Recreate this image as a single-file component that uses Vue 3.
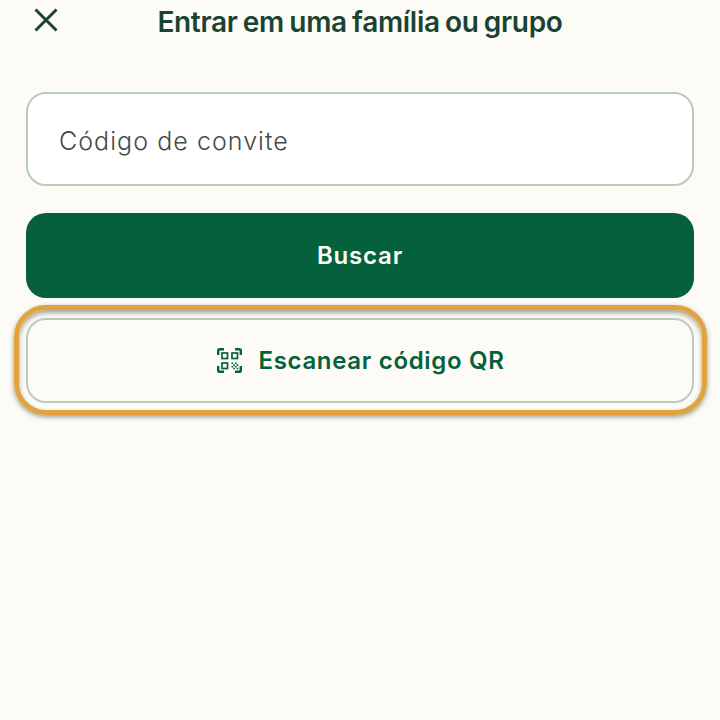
<script setup>
</script>

<template>
  <div class="page">
    <header class="head">
      <button class="close" aria-label="Fechar">
        <svg width="26" height="26" viewBox="0 0 26 26" fill="none">
          <path d="M2.500 2.500 L23.500 23.500 M23.500 2.500 L2.500 23.500" stroke="#1c4332" stroke-width="3" />
        </svg>
      </button>
      <h1 class="title">Entrar em uma família ou grupo</h1>
    </header>
    <main class="form">
      <div class="field">Código de convite</div>
      <button class="primary">Buscar</button>
      <button class="secondary">
        <svg class="qr" width="25" height="25" viewBox="0 0 25 25" fill="none">
          <path d="M1.200 7 V2.800 Q1.200 1.200 2.800 1.200 H7 M18 1.200 H22.200 Q23.800 1.200 23.800 2.800 V7 M23.800 18 V22.200 Q23.800 23.800 22.200 23.800 H18 M7 23.800 H2.800 Q1.200 23.800 1.200 22.200 V18" stroke="#05603c" stroke-width="2.400" />
          <rect x="5" y="5" width="5.500" height="5.500" stroke="#05603c" stroke-width="1.700" />
          <rect x="15" y="5" width="5.500" height="5.500" stroke="#05603c" stroke-width="1.700" />
          <rect x="5" y="15" width="5.500" height="5.500" stroke="#05603c" stroke-width="1.700" />
          <path d="M14.500 14.500h1.600v1.600h-1.600z M18 14.500h1.600v1.600h-1.600z M16.200 16.200h1.700v1.700h-1.700z M19.700 16.200h1.600v1.700h-1.600z M14.500 18h1.600v1.600h-1.600z M18 18h1.600v1.600h-1.600z M16.200 19.700h1.700v1.600h-1.700z M19.700 19.700h1.600v1.600h-1.600z" fill="#05603c" />
        </svg>
        <span>Escanear código QR</span>
        <span class="ring"></span>
      </button>
    </main>
  </div>
</template>

<style>
html, body { margin: 0; background: #fcfbf5; }
</style>

<style scoped>
.page {
  width: 720px;
  height: 720px;
  background: #fcfbf5;
  box-sizing: border-box;
  padding: 0 26px;
  font-family: "Inter", "Liberation Sans", sans-serif;
  overflow: hidden;
}
.head {
  position: relative;
  height: 92px;
  display: flex;
  justify-content: center;
}
.close {
  position: absolute;
  left: 7px;
  top: 7px;
  width: 26px;
  height: 26px;
  padding: 0;
  border: 0;
  background: none;
  display: block;
}
.close svg { display: block; }
.title {
  margin: 5px 0 0;
  font-size: 28px;
  line-height: 34px;
  font-weight: 600;
  letter-spacing: -0.3px;
  word-spacing: -1.500px;
  color: #1c4332;
  white-space: nowrap;
}
.form {
  display: flex;
  flex-direction: column;
}
.field {
  height: 94px;
  box-sizing: border-box;
  border: 2.500px solid #b9cbc1;
  border-radius: 20px;
  background: #ffffff;
  padding: 3px 0 0 31px;
  display: flex;
  align-items: center;
  font-size: 25px;
  font-weight: 300;
  letter-spacing: 1.050px;
  color: #454a47;
}
.primary {
  margin-top: 27px;
  height: 85px;
  border: 0;
  border-radius: 20px;
  background: #05603c;
  color: #fcfbf5;
  font-family: inherit;
  font-size: 24px;
  font-weight: 600;
  letter-spacing: 0.8px;
}
.secondary {
  position: relative;
  margin-top: 20px;
  height: 85px;
  box-sizing: border-box;
  border: 2.500px solid #b9cbc1;
  border-radius: 20px;
  background: transparent;
  color: #05603c;
  font-family: inherit;
  font-size: 24px;
  font-weight: 600;
  letter-spacing: 0.68px;
  padding: 0 0 0 2px;
  display: flex;
  align-items: center;
  justify-content: center;
  gap: 16px;
}
.ring {
  position: absolute;
  inset: -15px -14.500px -13.500px;
  border: 5px solid #e0a33e;
  border-radius: 32px;
  box-shadow: 0 2px 5px rgba(60, 60, 40, 0.5), inset 0 3px 5px rgba(60, 60, 40, 0.45);
  pointer-events: none;
}
</style>
